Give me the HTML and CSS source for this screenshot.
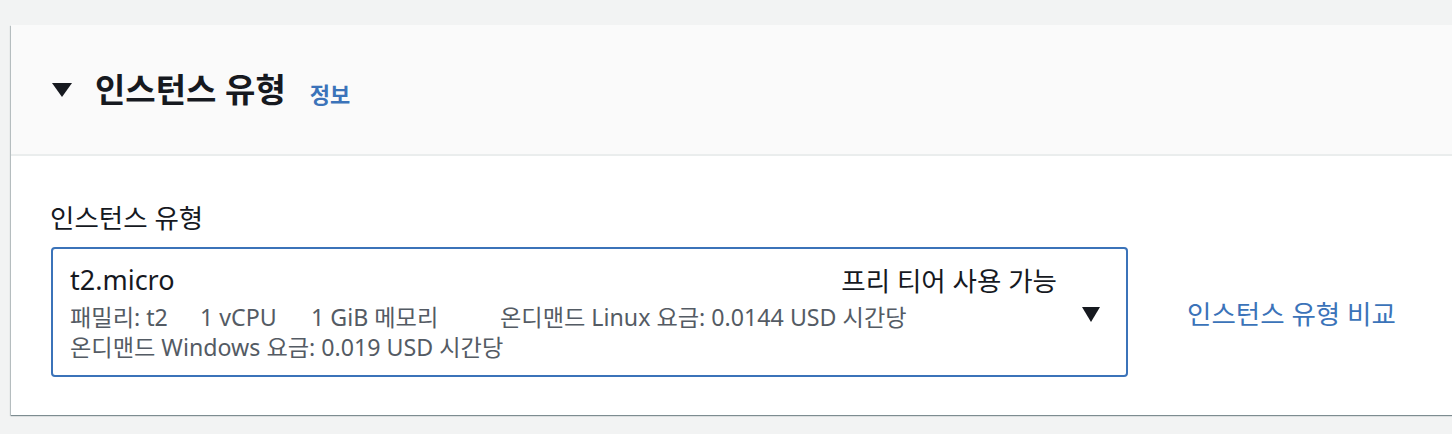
FILE: index.html
```html
<!DOCTYPE html>
<html lang="ko">
<head>
<meta charset="utf-8">
<link rel="stylesheet" href="styles.css">
</head>
<body>
<div class="page">
  <section class="card">
    <header class="card-header">
      <svg class="caret" width="20" height="14" viewBox="0 0 20 14"><polygon points="0,0 20,0 10,14" fill="#16191f"/></svg>
      <h2 class="title">인스턴스 유형</h2>
      <a class="info">정보</a>
    </header>
    <div class="card-body">
      <div class="label">인스턴스 유형</div>
      <div class="row">
        <div class="select">
          <div class="select-content">
            <div class="top-line">
              <span class="type-name">t2.micro</span>
              <span class="tag">프리 티어 사용 가능</span>
            </div>
            <div class="details">
              <span class="col c1">패밀리: t2</span><span class="col c2">1 vCPU</span><span class="col c3">1 GiB 메모리</span><span class="col">온디맨드 Linux 요금: 0.0144 USD 시간당</span>
            </div>
            <div class="details">온디맨드 Windows 요금: 0.019 USD 시간당</div>
          </div>
          <svg class="dd" width="18" height="15" viewBox="0 0 18 15"><polygon points="0,0 18,0 9,15" fill="#16191f"/></svg>
        </div>
        <a class="compare">인스턴스 유형 비교</a>
      </div>
    </div>
  </section>
</div>
</body>
</html>
```

FILE: styles.css
```css
html, body {
  margin: 0;
  padding: 0;
  background: #f2f3f3;
  font-family: "Noto Sans", "Noto Sans CJK KR", sans-serif;
  color: #16191f;
}
.page {
  padding: 25px 0 0 11px;
  height: 409px;
  overflow: hidden;
}
.card {
  background: #fff;
  width: 1460px;
  height: 390px;
  box-shadow: 0 1px 1px 0 rgba(0,28,36,.35), -1px 1px 1px 0 rgba(0,28,36,.2);
}
.card-header {
  background: #fafafa;
  border-bottom: 2px solid #eaeded;
  display: flex;
  align-items: center;
  padding-left: 41px;
  box-sizing: border-box;
  height: 131px;
}
.caret { margin-right: 23px; margin-top: 0; }
.title {
  margin: 0;
  font-size: 33px;
  font-weight: 700;
  line-height: 40px;
}
.info {
  margin-left: 24px;
  margin-top: 6px;
  font-size: 22px;
  font-weight: 700;
  color: #3b73b9;
}
.card-body {
  padding: 45px 0 0 39px;
}
.label {
  font-size: 26.5px;
  line-height: 34px;
  margin-bottom: 12px;
}
.row {
  display: flex;
  align-items: center;
  padding-left: 1px;
}
.select {
  width: 1077px;
  height: 130px;
  box-sizing: border-box;
  border: 2px solid #3b73b9;
  border-radius: 4px;
  display: flex;
  align-items: center;
  padding: 0 26px 0 17px;
}
.select-content {
  flex: 1;
  padding-right: 25px;
  align-self: flex-start;
  padding-top: 12px;
}
.top-line {
  display: flex;
  justify-content: space-between;
  align-items: center;
  height: 36px;
  margin-bottom: 5px;
}
.type-name { font-size: 27px; }
.tag { font-size: 26.5px; }
.details {
  font-size: 23.2px;
  line-height: 30px;
  color: #545b64;
  white-space: nowrap;
}
.col { display: inline-block; }
.c1 { width: 130px; }
.c2 { width: 111px; }
.c3 { width: 189px; }
.dd { margin-top: 4px; }
.compare {
  margin-left: 59px;
  font-size: 26.5px;
  color: #3b73b9;
}
```
